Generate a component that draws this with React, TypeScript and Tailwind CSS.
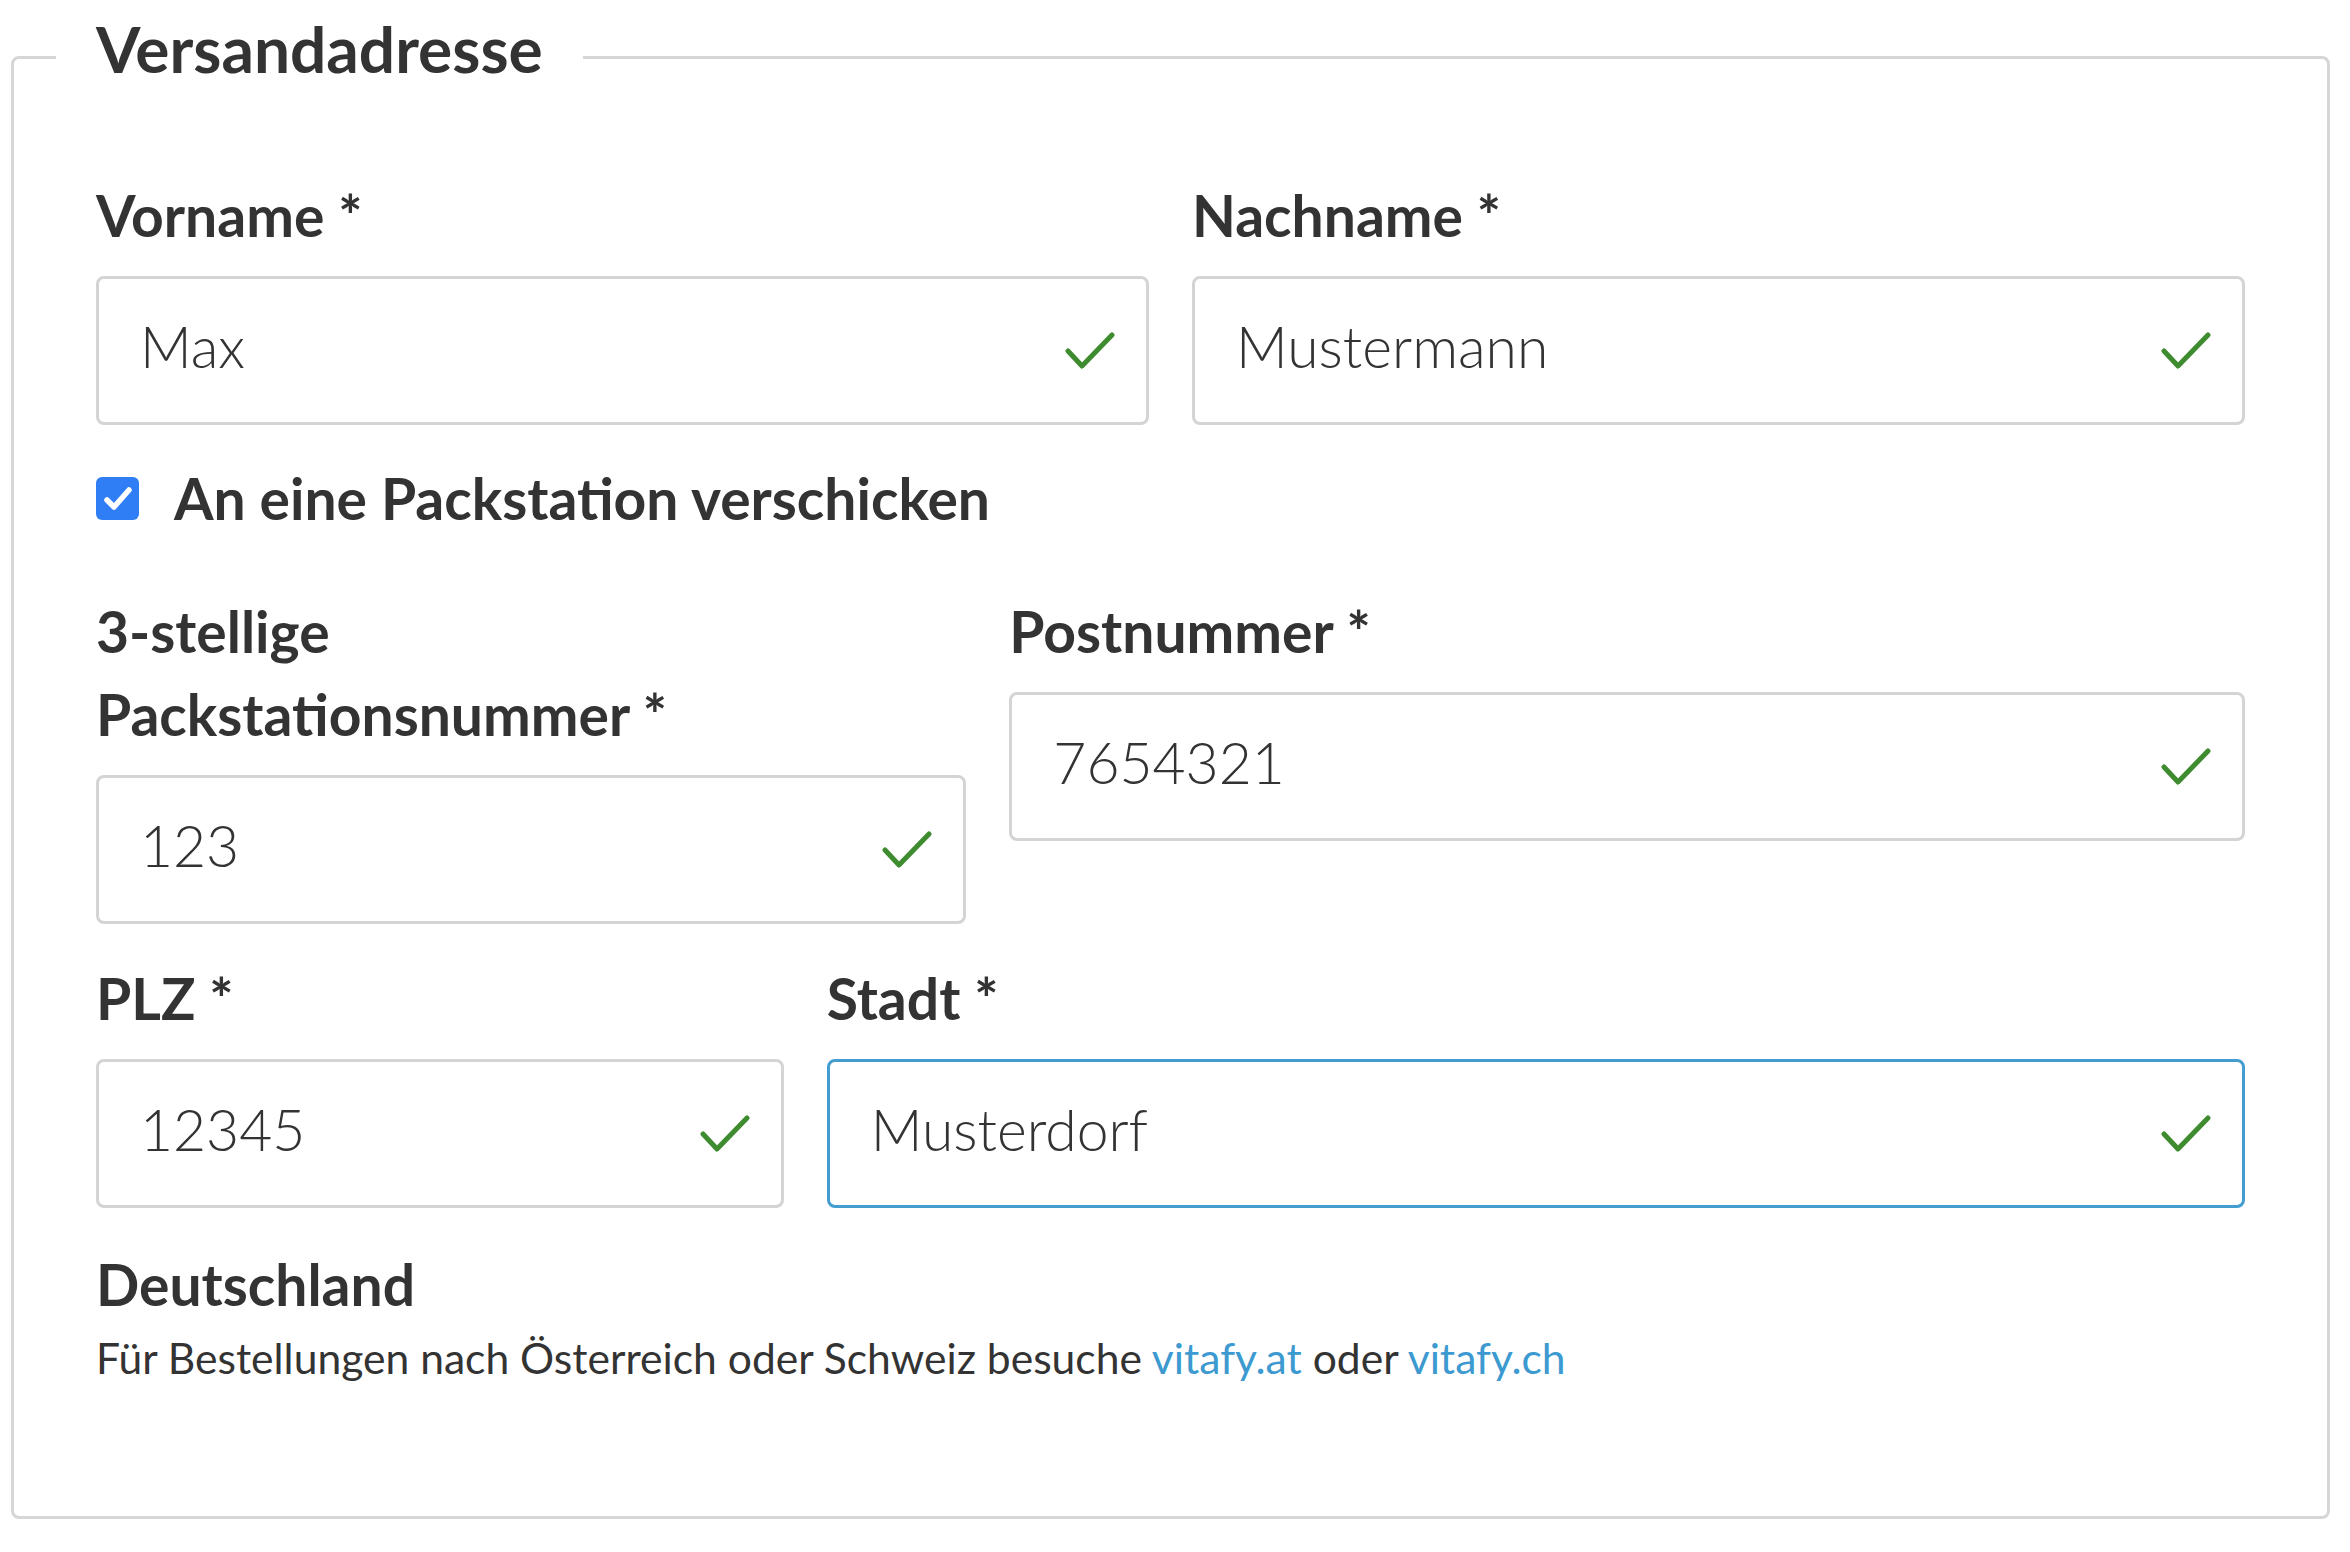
import React from 'react'

function GreenCheck() {
  return (
    <svg
      width="50"
      height="40"
      viewBox="0 0 50 40"
      className="pointer-events-none absolute right-[34px] top-1/2 -translate-y-1/2"
      fill="none"
    >
      <path d="M3 20 L17 35 L47 4" stroke="#3f8b2f" strokeWidth="5" strokeLinecap="round" strokeLinejoin="round" />
    </svg>
  )
}

type FieldProps = {
  label: React.ReactNode
  value: string
  className?: string
  focused?: boolean
}

function Field({ label, value, className = '', focused = false }: FieldProps) {
  return (
    <div className={className}>
      <label className="mb-[19px] block text-[57px] font-bold leading-[83px] text-[#333]">{label}</label>
      <div className="relative">
        <input
          readOnly
          value={value}
          className={`h-[149px] w-full rounded-[8px] border-[3px] bg-white pb-[10px] pl-[41px] pr-[100px] text-[57px] font-light text-[#333] outline-none ${
            focused ? 'border-[#449dcf]' : 'border-[#d4d4d4]'
          }`}
        />
        <GreenCheck />
      </div>
    </div>
  )
}

export default function App() {
  return (
    <div className="min-h-screen bg-white pt-[13px] pl-[11px] pr-[20px] font-['Lato',sans-serif] text-[#333]">
      <fieldset className="rounded-[8px] border-[3px] border-[#d6d6d6] px-[82px] pb-[127px]">
        <legend className="-ml-[40px] px-[40px] pb-[16px] text-[64px] font-bold leading-[72px] text-[#333]">
          Versandadresse
        </legend>

        <div className="mt-[73px] grid grid-cols-12 gap-x-[43px]">
          <Field className="col-span-6" label="Vorname *" value="Max" />
          <Field className="col-span-6" label="Nachname *" value="Mustermann" />
        </div>

        <div className="mt-[32px] mb-[50px] flex items-center gap-[35px]">
          <span className="flex h-[43px] w-[43px] items-center justify-center rounded-[6px] bg-[#2f7ef5]">
            <svg width="30" height="26" viewBox="0 0 30 26" fill="none">
              <path d="M4 14 L11 21 L26 4" stroke="#fff" strokeWidth="5.5" strokeLinecap="round" strokeLinejoin="round" />
            </svg>
          </span>
          <span className="text-[57px] font-bold leading-[83px]">An eine Packstation verschicken</span>
        </div>

        <div className="grid grid-cols-12 items-start gap-x-[43px]">
          <Field
            className="col-span-5"
            label={
              <>
                3-stellige
                <br />
                Packstationsnummer *
              </>
            }
            value="123"
          />
          <Field className="col-span-7" label="Postnummer *" value="7654321" />
        </div>

        <div className="mt-[33px] grid grid-cols-12 gap-x-[43px]">
          <Field className="col-span-4" label="PLZ *" value="12345" />
          <Field className="col-span-8" label="Stadt *" value="Musterdorf" focused />
        </div>

        <div className="mt-[35px]">
          <div className="text-[57px] font-bold leading-[83px]">Deutschland</div>
          <p className="text-[42.6px] leading-[63px]">
            Für Bestellungen nach Österreich oder Schweiz besuche{' '}
            <a href="#" className="text-[#3c9ad0]">vitafy.at</a> oder{' '}
            <a href="#" className="text-[#3c9ad0]">vitafy.ch</a>
          </p>
        </div>
      </fieldset>
    </div>
  )
}
